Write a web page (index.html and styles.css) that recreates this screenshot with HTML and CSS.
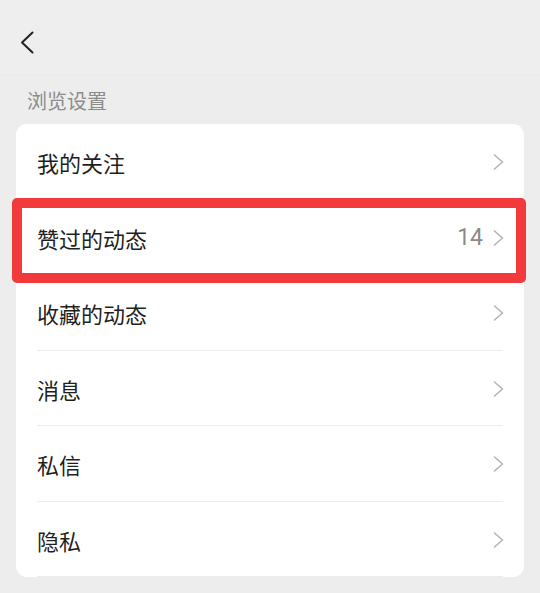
FILE: index.html
```html
<!DOCTYPE html>
<html lang="zh-CN">
<head>
<meta charset="utf-8">
<title>浏览设置</title>
<link rel="stylesheet" href="styles.css">
</head>
<body>
<div class="page">
  <header class="topbar">
    <svg class="back" width="14" height="23" viewBox="0 0 14 23"><polyline points="12.5,1.5 2,11.5 12.5,21.5" fill="none" stroke="#222" stroke-width="2" stroke-linecap="round" stroke-linejoin="round"/></svg>
  </header>
  <div class="section-title">浏览设置</div>
  <div class="card">
    <div class="row"><span class="label">我的关注</span><span class="right"><svg class="chev" width="11" height="16" viewBox="0 0 11 16"><polyline points="1.5,1 9.5,8 1.5,15" fill="none" stroke="#b4b4b4" stroke-width="1.6" stroke-linecap="round" stroke-linejoin="round"/></svg></span></div>
    <div class="row"><span class="label">赞过的动态</span><span class="right"><span class="count">14</span><svg class="chev" width="11" height="16" viewBox="0 0 11 16"><polyline points="1.5,1 9.5,8 1.5,15" fill="none" stroke="#b4b4b4" stroke-width="1.6" stroke-linecap="round" stroke-linejoin="round"/></svg></span></div>
    <div class="row"><span class="label">收藏的动态</span><span class="right"><svg class="chev" width="11" height="16" viewBox="0 0 11 16"><polyline points="1.5,1 9.5,8 1.5,15" fill="none" stroke="#b4b4b4" stroke-width="1.6" stroke-linecap="round" stroke-linejoin="round"/></svg></span></div>
    <div class="row"><span class="label">消息</span><span class="right"><svg class="chev" width="11" height="16" viewBox="0 0 11 16"><polyline points="1.5,1 9.5,8 1.5,15" fill="none" stroke="#b4b4b4" stroke-width="1.6" stroke-linecap="round" stroke-linejoin="round"/></svg></span></div>
    <div class="row"><span class="label">私信</span><span class="right"><svg class="chev" width="11" height="16" viewBox="0 0 11 16"><polyline points="1.5,1 9.5,8 1.5,15" fill="none" stroke="#b4b4b4" stroke-width="1.6" stroke-linecap="round" stroke-linejoin="round"/></svg></span></div>
    <div class="row"><span class="label">隐私</span><span class="right"><svg class="chev" width="11" height="16" viewBox="0 0 11 16"><polyline points="1.5,1 9.5,8 1.5,15" fill="none" stroke="#b4b4b4" stroke-width="1.6" stroke-linecap="round" stroke-linejoin="round"/></svg></span></div>
    <div class="highlight"></div>
  </div>
</div>
</body>
</html>
```

FILE: styles.css
```css
html, body {
  margin: 0;
  padding: 0;
  background: #ededed;
}
body {
  font-family: "Noto Sans CJK SC", "Noto Sans", sans-serif;
  color: #1f1f1f;
}
.page {
  width: 540px;
  height: 593px;
  overflow: hidden;
}
.topbar {
  height: 75px;
  box-sizing: border-box;
  background: #eeeeee;
  border-bottom: 1px solid #e9e9e9;
  display: flex;
  align-items: center;
  padding-left: 20px;
  padding-top: 10px;
}
.back {
  display: block;
}
.section-title {
  padding: 12px 0 9px 27px;
  font-size: 20px;
  line-height: 28px;
  color: #8c8c8c;
}
.card {
  position: relative;
  margin: 0 16px;
  background: #fff;
  border-radius: 11px;
}
.row {
  height: 75.5px;
  margin: 0 21px;
  display: flex;
  align-items: center;
  justify-content: space-between;
  border-bottom: 1px solid #ececec;
  padding-top: 2px;
  box-sizing: border-box;
}
.row:last-of-type {
  border-bottom: none;
}
.label {
  font-size: 22px;
  line-height: 30px;
  color: #1f1f1f;
}
.right {
  display: flex;
  align-items: center;
  margin-right: -1px;
}
.count {
  font-family: Roboto, "Noto Sans", sans-serif;
  font-size: 23px;
  color: #8a8a8a;
  margin-right: 10px;
  line-height: 30px;
}
.chev {
  display: block;
}
.highlight {
  position: absolute;
  left: -4px;
  top: 74px;
  width: 514px;
  height: 85px;
  box-sizing: border-box;
  border: 10px solid #f2393b;
  border-radius: 5px;
}
```
